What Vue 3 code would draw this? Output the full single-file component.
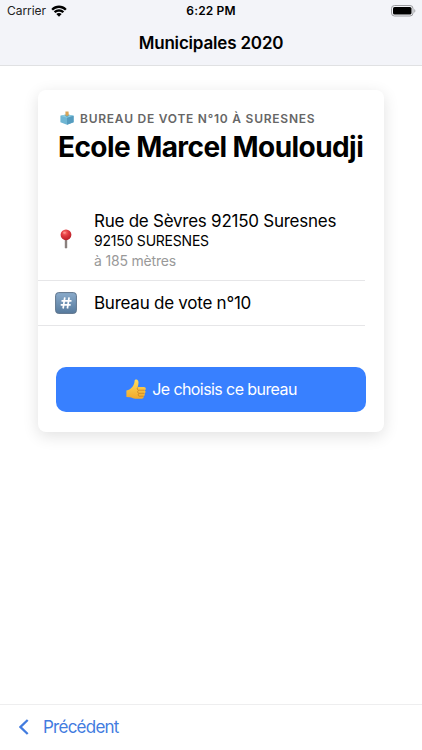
<script setup>
const address = {
  street: 'Rue de Sèvres 92150 Suresnes',
  city: '92150 SURESNES',
  distance: 'à 185 mètres',
}
</script>

<template>
  <div class="screen">
    <header class="header">
      <div class="status">
        <div class="carrier">
          <span class="carrier-name">Carrier</span>
          <svg class="wifi" viewBox="0 0 16 12">
            <path d="M.3 3.900C4.700-.5 11.300-.5 15.700 3.900L14 5.600C10.600 2.200 5.400 2.200 2 5.600Z" />
            <path d="M2.800 6.400C5.800 3.500 10.200 3.500 13.200 6.400L11.500 8.100C9.500 6.200 6.500 6.200 4.500 8.100Z" />
            <path d="M5.300 9C6.900 7.500 9.100 7.500 10.700 9L8 11.700Z" />
          </svg>
        </div>
        <span class="clock">6:22 PM</span>
        <svg class="battery" viewBox="0 0 25 12">
          <rect x=".5" y=".5" width="21.500" height="10.500" rx="3" fill="none" stroke="#9b9ca0" />
          <rect x="2" y="2" width="18.500" height="7.500" rx="1.600" fill="#000" />
          <path d="M23.300 4v3.700c1.400-.6 1.400-3.100 0-3.700Z" fill="#9b9ca0" />
        </svg>
      </div>
      <h1 class="title">Municipales 2020</h1>
    </header>

    <main class="content">
      <section class="card">
        <div class="eyebrow">
          <svg class="ballot" viewBox="0 0 14 14">
            <path d="M.4 4.800 7 3.200l6.600 1.600v6.400L7 13.700.4 11.200Z" fill="#6fb6d3" />
            <path d="M.4 4.800 7 3.200l6.600 1.600L7 6.800Z" fill="#8ccbdf" />
            <path d="M7 6.800 13.600 4.800v6.400L7 13.700Z" fill="#559cbf" />
            <path d="M4.800 4.800 7 4.200l2.300.6L7 5.500Z" fill="#397a94" />
            <path d="M5.400.6 8.500.4l.3 3.900L7 5l-1.500-.6Z" fill="#d9a458" />
          </svg>
          <span class="eyebrow-text">BUREAU DE VOTE N°10 À SURESNES</span>
        </div>
        <h2 class="name">Ecole Marcel Mouloudji</h2>

        <div class="rows">
          <div class="row row-address">
            <div class="row-icon">
              <svg class="pin" viewBox="0 0 12 20">
                <defs>
                  <radialGradient id="pin-head" cx=".4" cy=".3" r=".7">
                    <stop offset="0" stop-color="#ff7770" />
                    <stop offset=".45" stop-color="#e03b40" />
                    <stop offset="1" stop-color="#b92028" />
                  </radialGradient>
                </defs>
                <path d="M4.800 9h2.400v9.500L6 19.800 4.800 18.500Z" fill="#8a817e" />
                <circle cx="6" cy="5.800" r="5.400" fill="url(#pin-head)" />
                <ellipse cx="4.400" cy="3.800" rx="1.400" ry="1" fill="#ffaaa4" opacity=".6" />
              </svg>
            </div>
            <div class="lines">
              <div class="street">{{ address.street }}</div>
              <div class="city">{{ address.city }}</div>
              <div class="distance">{{ address.distance }}</div>
            </div>
          </div>
          <div class="row row-office">
            <div class="row-icon">
              <svg class="hash" viewBox="0 0 22 22">
                <defs>
                  <linearGradient id="hash-bg" x1="0" y1="0" x2="0" y2="1">
                    <stop offset="0" stop-color="#8aabcb" />
                    <stop offset="1" stop-color="#567a9d" />
                  </linearGradient>
                </defs>
                <rect x=".6" y=".6" width="20.800" height="20.800" rx="3" fill="url(#hash-bg)" stroke="#60758c" stroke-width="1" />
                <path d="M9.800 5.300 8.100 16.500M14.100 5.300 12.400 16.500M6.500 8.900h10M5.700 12.900h10" fill="none" stroke="#fff" stroke-width="1.700" />
              </svg>
            </div>
            <div class="office">Bureau de vote n°10</div>
          </div>
        </div>

        <button class="choose">
          <svg class="thumb" viewBox="0 0 20 21">
            <defs>
              <linearGradient id="thumb-skin" x1="0" y1="0" x2="0" y2="1">
                <stop offset="0" stop-color="#ffdc5e" />
                <stop offset="1" stop-color="#f1a92b" />
              </linearGradient>
            </defs>
            <path d="M.4 11.600C3 11 5 9.800 6.500 7.800 8 5.700 8.500 4 8.600 1.800 8.700.2 11.200-.1 12.100 1.700c.8 1.700.3 4-.4 6.300h6.200c2.200 0 2.500 2.700.8 3.200 1.300.7 1.100 2.700-.4 3.100 1 .8.600 2.600-.8 2.900.5 1.400-.3 2.500-1.800 2.500H9.500c-2.600 0-3.600-1.400-5.500-1.500L.4 18Z" fill="url(#thumb-skin)" />
            <path d="M12.200 8.200c-1.300.5-1.300 2.700.2 3h6.200M12.600 11.300c-1.400.5-1.200 2.800.2 3h5.300M13 14.400c-1.100.5-1 2.600.2 2.800h4.200" fill="none" stroke="#c98224" stroke-width=".8" />
          </svg>
          <span class="choose-text">Je choisis ce bureau</span>
        </button>
      </section>
    </main>

    <footer class="footer">
      <svg class="chevron" viewBox="0 0 10 16">
        <path d="M8.700 1 1.500 8l7.200 7" fill="none" stroke="#427cdf" stroke-width="2.300" />
      </svg>
      <span class="back">Précédent</span>
    </footer>
  </div>
</template>

<style>
body {
  margin: 0;
  background: #fff;
}
</style>

<style scoped>
.screen {
  display: flex;
  flex-direction: column;
  box-sizing: border-box;
  width: 422px;
  height: 750px;
  overflow: hidden;
  font-family: Inter, 'Liberation Sans', sans-serif;
  color: #000;
  background: #fff;
  white-space: nowrap;
}
svg {
  display: block;
  flex: none;
}
.header {
  box-sizing: border-box;
  height: 66px;
  background: #f3f4f9;
  border-bottom: 1px solid #e0e1e3;
}
.status {
  display: grid;
  grid-template-columns: 1fr auto 1fr;
  align-items: center;
  height: 22px;
  padding: 0 6px 0 7px;
}
.carrier {
  display: flex;
  align-items: center;
  gap: 5px;
}
.carrier-name {
  font-size: 12px;
  line-height: 22px;
  letter-spacing: -0.05px;
  color: #222;
}
.wifi {
  width: 16px;
  height: 12px;
  margin-bottom: 1px;
}
.clock {
  margin-right: 1px;
  font-size: 12px;
  line-height: 22px;
  font-weight: 600;
  letter-spacing: 0.15px;
}
.battery {
  width: 25px;
  height: 12px;
  margin-bottom: 1px;
  justify-self: end;
}
.title {
  margin: 0;
  font-size: 17px;
  line-height: 42px;
  font-weight: 600;
  text-align: center;
  letter-spacing: -0.18px;
}
.content {
  flex: 1;
  padding: 24px 38px 0;
}
.card {
  box-sizing: border-box;
  width: 346px;
  height: 342px;
  padding-top: 20px;
  border-radius: 8px;
  background: #fff;
  box-shadow: 0 4px 16px rgba(0, 0, 0, 0.12);
}
.eyebrow {
  display: flex;
  align-items: center;
  gap: 6.5px;
  height: 17px;
  padding-left: 21.5px;
}
.ballot {
  width: 14px;
  height: 14px;
  margin-bottom: 1px;
}
.eyebrow-text {
  font-size: 12px;
  line-height: 17px;
  font-weight: 600;
  letter-spacing: 0.76px;
  color: #666;
}
.name {
  margin: 0;
  padding-left: 20px;
  font-size: 28px;
  line-height: 40px;
  font-weight: 700;
  letter-spacing: -0.57px;
}
.rows {
  margin-top: 33px;
}
.row {
  display: flex;
  align-items: center;
  box-sizing: border-box;
  width: 327px;
  border-bottom: 1px solid #e6e6e8;
}
.row-address {
  height: 81px;
}
.row-office {
  height: 45px;
}
.row-icon {
  display: flex;
  justify-content: center;
  width: 56px;
}
.pin {
  width: 12px;
  height: 20px;
  margin-bottom: 2px;
}
.hash {
  width: 22px;
  height: 22px;
  margin-bottom: 1px;
}
.street,
.office {
  font-size: 17px;
  line-height: 21px;
  letter-spacing: -0.25px;
}
.street {
  padding-top: 1px;
}
.city {
  font-size: 14px;
  line-height: 18px;
  letter-spacing: -0.22px;
}
.distance {
  padding-top: 1px;
  font-size: 14px;
  line-height: 20px;
  letter-spacing: -0.18px;
  color: #999;
}
.choose {
  display: flex;
  align-items: center;
  justify-content: center;
  gap: 6px;
  width: 310px;
  height: 45px;
  margin: 40.5px 0 0 18px;
  padding: 0 0 0 1px;
  border: 0;
  border-radius: 10px;
  background: #3880ff;
  color: #fff;
  font-family: inherit;
}
.thumb {
  width: 20px;
  height: 21px;
}
.choose-text {
  font-size: 16px;
  line-height: 24px;
  letter-spacing: -0.58px;
}
.footer {
  display: flex;
  align-items: center;
  gap: 14px;
  box-sizing: border-box;
  height: 46px;
  padding: 0 0 1px 19px;
  border-top: 1.5px solid #eeeeef;
}
.chevron {
  width: 10px;
  height: 16px;
}
.back {
  font-size: 17px;
  line-height: 24px;
  letter-spacing: -0.75px;
  color: #427cdf;
}
</style>
